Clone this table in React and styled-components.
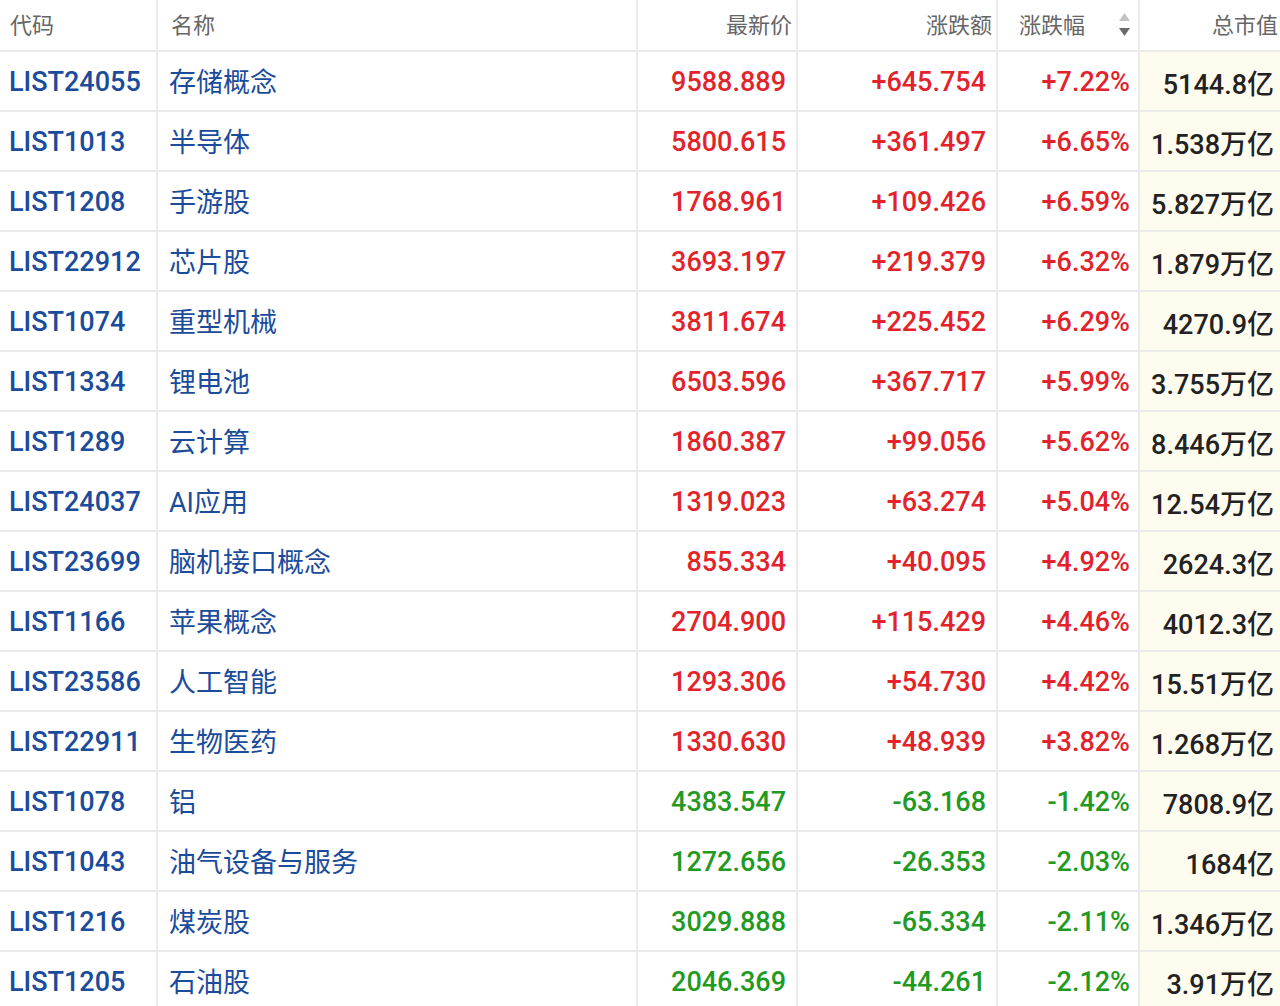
import React from 'react';
import styled, { createGlobalStyle } from 'styled-components';

const GlobalStyle = createGlobalStyle`
  html, body {
    margin: 0;
    padding: 0;
    background: #ffffff;
  }
  body {
    overflow: hidden;
    font-family: Roboto, "Noto Sans CJK SC", sans-serif;
  }
`;

const rows = [
  ['LIST24055', '存储概念', '9588.889', '+645.754', '+7.22%', '5144.8亿'],
  ['LIST1013', '半导体', '5800.615', '+361.497', '+6.65%', '1.538万亿'],
  ['LIST1208', '手游股', '1768.961', '+109.426', '+6.59%', '5.827万亿'],
  ['LIST22912', '芯片股', '3693.197', '+219.379', '+6.32%', '1.879万亿'],
  ['LIST1074', '重型机械', '3811.674', '+225.452', '+6.29%', '4270.9亿'],
  ['LIST1334', '锂电池', '6503.596', '+367.717', '+5.99%', '3.755万亿'],
  ['LIST1289', '云计算', '1860.387', '+99.056', '+5.62%', '8.446万亿'],
  ['LIST24037', 'AI应用', '1319.023', '+63.274', '+5.04%', '12.54万亿'],
  ['LIST23699', '脑机接口概念', '855.334', '+40.095', '+4.92%', '2624.3亿'],
  ['LIST1166', '苹果概念', '2704.900', '+115.429', '+4.46%', '4012.3亿'],
  ['LIST23586', '人工智能', '1293.306', '+54.730', '+4.42%', '15.51万亿'],
  ['LIST22911', '生物医药', '1330.630', '+48.939', '+3.82%', '1.268万亿'],
  ['LIST1078', '铝', '4383.547', '-63.168', '-1.42%', '7808.9亿'],
  ['LIST1043', '油气设备与服务', '1272.656', '-26.353', '-2.03%', '1684亿'],
  ['LIST1216', '煤炭股', '3029.888', '-65.334', '-2.11%', '1.346万亿'],
  ['LIST1205', '石油股', '2046.369', '-44.261', '-2.12%', '3.91万亿'],
];

const tones = {
  link: '#1b4b9b',
  up: '#e3232c',
  down: '#1f9a22',
  plain: '#222222',
};

const Page = styled.div`
  width: 1280px;
  height: 1006px;
  overflow: hidden;
`;

const Grid = styled.div`
  width: 1290px;
  display: grid;
  grid-template-columns: 158px 480px 160px 200px 142px 150px;
`;

const HeadCell = styled.div`
  height: 52px;
  box-sizing: border-box;
  border-bottom: 2px solid #ebebeb;
  border-right: 2px solid #ebebeb;
  display: flex;
  align-items: center;
  justify-content: ${(p) => (p.$right ? 'flex-end' : 'space-between')};
  padding: 0 ${(p) => p.$pr ?? 4}px 5px ${(p) => p.$pl ?? 0}px;
  font-size: 22px;
  color: #666666;
  white-space: nowrap;
`;

const Cell = styled.div`
  height: 60px;
  box-sizing: border-box;
  border-bottom: 2px solid #ebebeb;
  border-right: 2px solid #ebebeb;
  display: flex;
  align-items: center;
  justify-content: ${(p) => (p.$right ? 'flex-end' : 'flex-start')};
  padding: 2px ${(p) => p.$pr ?? 0}px 0 ${(p) => p.$pl ?? 0}px;
  font-size: 27px;
  font-weight: 500;
  color: ${(p) => tones[p.$tone]};
  background: ${(p) => (p.$shade ? '#fdfcef' : '#ffffff')};
  white-space: nowrap;
`;

const NameCell = styled(Cell)`
  padding-top: 0;
  padding-bottom: 1px;
  font-weight: 400;
`;

const Sort = styled.span`
  display: flex;
  flex-direction: column;
  gap: 7px;
  margin-top: 4px;
`;

const SortIcon = () => (
  <Sort>
    <svg width="11" height="8" viewBox="0 0 11 8">
      <path d="M5.5 0 L11 8 L0 8 Z" fill="#c2c2c2" />
    </svg>
    <svg width="11" height="8" viewBox="0 0 11 8">
      <path d="M0 0 L11 0 L5.5 8 Z" fill="#6a6a6a" />
    </svg>
  </Sort>
);

const App = () => (
  <Page>
    <GlobalStyle />
    <Grid>
      <HeadCell $pl={10}>代码</HeadCell>
      <HeadCell $pl={13}>名称</HeadCell>
      <HeadCell $right $pr={4}>最新价</HeadCell>
      <HeadCell $right $pr={4}>涨跌额</HeadCell>
      <HeadCell $pl={21} $pr={8}>
        涨跌幅
        <SortIcon />
      </HeadCell>
      <HeadCell $right $pr={10}>总市值</HeadCell>

      {rows.map((r) => {
        const tone = r[3].startsWith('-') ? 'down' : 'up';
        return (
          <React.Fragment key={r[0]}>
            <Cell $tone="link" $pl={9}>{r[0]}</Cell>
            <NameCell $tone="link" $pl={11}>{r[1]}</NameCell>
            <Cell $tone={tone} $right $pr={10}>{r[2]}</Cell>
            <Cell $tone={tone} $right $pr={10}>{r[3]}</Cell>
            <Cell $tone={tone} $right $pr={8}>{r[4]}</Cell>
            <Cell $tone="plain" $right $pr={14} $shade>{r[5]}</Cell>
          </React.Fragment>
        );
      })}
    </Grid>
  </Page>
);

export default App;
